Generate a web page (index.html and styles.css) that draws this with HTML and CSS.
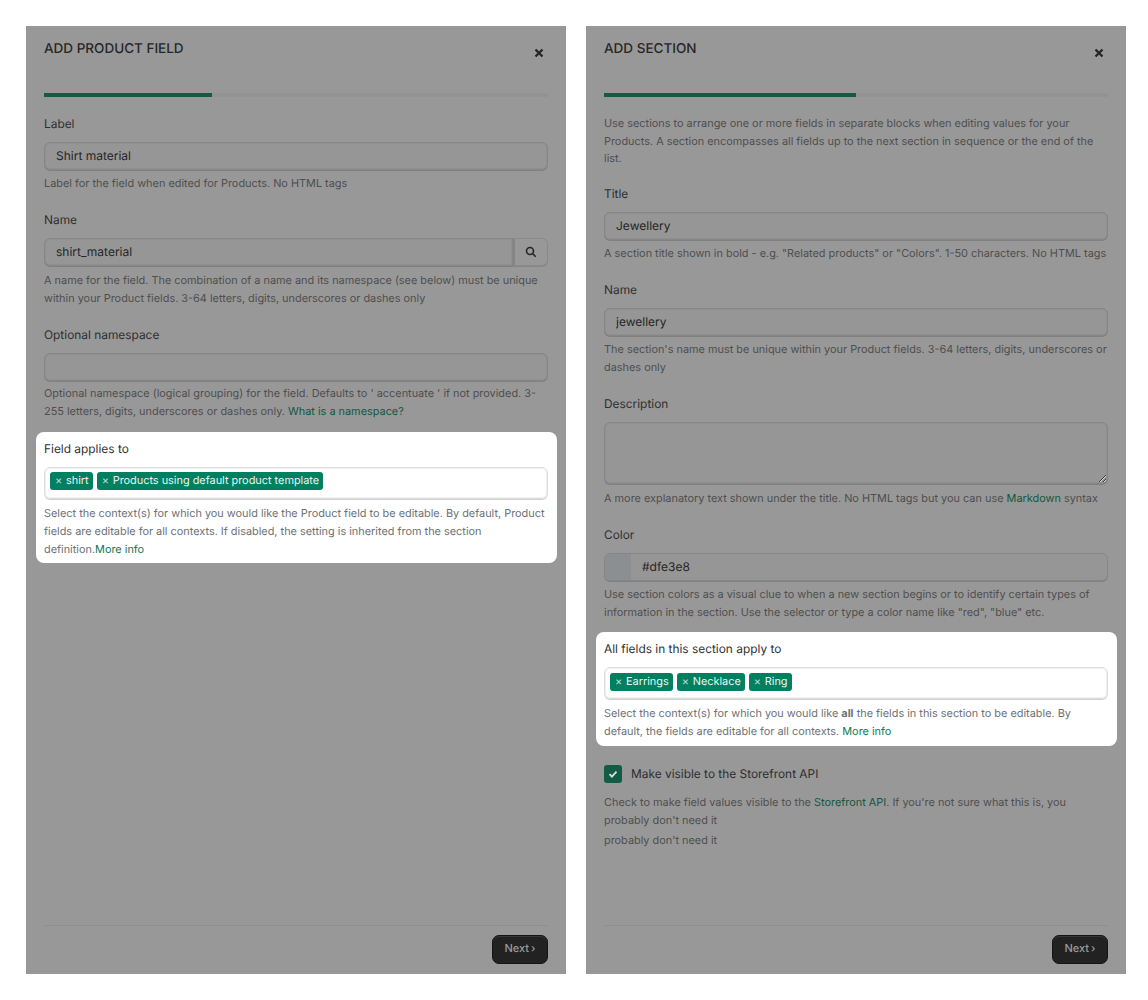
FILE: index.html
```html
<!DOCTYPE html>
<html lang="en">
<head>
<meta charset="utf-8">
<title>Add field and section</title>
<link rel="stylesheet" href="styles.css">
</head>
<body>
<main class="page">
  <section class="panel">
    <header class="panel-head">
      <h2>ADD PRODUCT FIELD</h2>
      <svg class="close" viewBox="0 0 10 10"><path d="M1.5 1.5l7 7M8.500 1.5l-7 7"/></svg>
    </header>
    <div class="progress"><div class="progress-fill step-one"></div></div>
    <div class="field">
      <label>Label</label>
      <input class="input" type="text" value="Shirt material">
      <p class="hint">Label for the field when edited for Products. No HTML tags</p>
    </div>
    <div class="field">
      <label>Name</label>
      <div class="input-group">
        <input class="input" type="text" value="shirt_material">
        <button class="search-btn" type="button"><svg viewBox="0 0 12 12"><circle cx="5" cy="5" r="3.500"/><path d="M7.700 7.700L10.700 10.700"/></svg></button>
      </div>
      <p class="hint hint-wide">A name for the field. The combination of a name and its namespace (see below) must be unique within your Product fields. 3-64 letters, digits, underscores or dashes only</p>
    </div>
    <div class="field">
      <label>Optional namespace</label>
      <input class="input" type="text" value="">
      <p class="hint hint-tight">Optional namespace (logical grouping) for the field. Defaults to ' accentuate ' if not provided. 3-255 letters, digits, underscores or dashes only. <a href="#">What is a namespace?</a></p>
    </div>
    <div class="highlight highlight-left">
      <label>Field applies to</label>
      <div class="tags">
        <span class="tag"><i>×</i>shirt</span>
        <span class="tag"><i>×</i>Products using default product template</span>
      </div>
      <p class="hint hint-wide">Select the context(s) for which you would like the Product field to be editable. By default, Product fields are editable for all contexts. If disabled, the setting is inherited from the section definition.<a href="#">More info</a></p>
    </div>
    <footer class="panel-foot"><button class="next" type="button">Next<span>›</span></button></footer>
  </section>

  <section class="panel">
    <header class="panel-head">
      <h2>ADD SECTION</h2>
      <svg class="close" viewBox="0 0 10 10"><path d="M1.5 1.5l7 7M8.500 1.5l-7 7"/></svg>
    </header>
    <div class="progress"><div class="progress-fill step-two"></div></div>
    <p class="hint intro">Use sections to arrange one or more fields in separate blocks when editing values for your Products. A section encompasses all fields up to the next section in sequence or the end of the list.</p>
    <div class="field field-first">
      <label>Title</label>
      <input class="input" type="text" value="Jewellery">
      <p class="hint">A section title shown in bold - e.g. "Related products" or "Colors". 1-50 characters. No HTML tags</p>
    </div>
    <div class="field">
      <label>Name</label>
      <input class="input" type="text" value="jewellery">
      <p class="hint">The section's name must be unique within your Product fields. 3-64 letters, digits, underscores or dashes only</p>
    </div>
    <div class="field">
      <label>Description</label>
      <textarea class="input textarea"></textarea>
      <p class="hint hint-wide">A more explanatory text shown under the title. No HTML tags but you can use <a href="#">Markdown</a> syntax</p>
    </div>
    <div class="field">
      <label>Color</label>
      <div class="color-input"><span class="swatch"></span><span class="color-value">#dfe3e8</span></div>
      <p class="hint">Use section colors as a visual clue to when a new section begins or to identify certain types of information in the section. Use the selector or type a color name like "red", "blue" etc.</p>
    </div>
    <div class="highlight highlight-right">
      <label>All fields in this section apply to</label>
      <div class="tags tags-low">
        <span class="tag"><i>×</i>Earrings</span>
        <span class="tag"><i>×</i>Necklace</span>
        <span class="tag"><i>×</i>Ring</span>
      </div>
      <p class="hint hint-wide">Select the context(s) for which you would like <b>all</b> the fields in this section to be editable. By default, the fields are editable for all contexts. <a href="#">More info</a></p>
    </div>
    <div class="check-row">
      <span class="checkbox"><svg viewBox="0 0 12 12"><path d="M2.500 6.200l2.400 2.400 4.600-5"/></svg></span>
      <span class="check-label">Make visible to the Storefront API</span>
    </div>
    <p class="hint check-hint">Check to make field values visible to the <a href="#">Storefront API</a>. If you're not sure what this is, you probably don't need it</p>
    <p class="hint repeat">probably don't need it</p>
    <footer class="panel-foot"><button class="next" type="button">Next<span>›</span></button></footer>
  </section>
</main>
</body>
</html>
```
FILE: styles.css
```css
* { box-sizing: border-box; }
html, body { margin: 0; background: #fff; }
body { font-family: Inter, "Liberation Sans", sans-serif; color: #2b2b2b; text-rendering: geometricPrecision; }
.page { display: flex; gap: 20px; padding: 26px 22px 26px 26px; height: 1000px; }
.panel {
  width: 540px; height: 948px; background: #989898;
  padding: 0 18px; display: flex; flex-direction: column;
}
.panel-head { display: flex; justify-content: space-between; align-items: flex-start; height: 67px; }
.panel-head h2 { margin: 14px 0 0; font-size: 13.500px; line-height: 18px; font-weight: 500; color: #262626; }
.close { width: 10px; height: 10px; margin: 22px 4px 0 0; fill: none; stroke: #262626; stroke-width: 2.300; }
.progress { height: 4px; background: #939393; border-radius: 2px; flex: none; }
.progress-fill { height: 100%; background: #135b45; }
.step-one { width: 168px; }
.step-two { width: 252px; }
.field { margin-top: 19px; }
.progress + .field { margin-top: 18px; }
.progress + .intro { margin-top: 18px; }
.field-first { margin-top: 17px; }
label { display: block; font-size: 11.900px; line-height: 18px; color: #2e2e2e; }
.input {
  display: block; width: 100%; height: 28px; margin-top: 9px; padding: 0 11px 1px;
  background: #969696; border: 1px solid #868686; border-radius: 6px;
  box-shadow: 0 1px 0 #808080, inset 0 0 0 1px #909090;
  font: 12px Inter, "Liberation Sans", sans-serif; color: #262626; outline: none;
  text-rendering: geometricPrecision;
}
.textarea { height: 62px; resize: vertical; }
.hint { margin: 4px 0 0; font-size: 10.900px; line-height: 18px; color: #4f4f4f; }
.hint-wide { margin-top: 5px; }
.hint-tight { margin-top: 3px; }
.hint a { color: #14573f; text-decoration: none; }
.hint b { font-weight: 700; }
.intro { line-height: 17.500px; margin-bottom: 0; }
.input-group { display: flex; margin-top: 9px; }
.input-group .input { margin-top: 0; flex: 1; border-radius: 6px 0 0 6px; }
.search-btn {
  width: 35px; height: 28px; padding: 0; background: #989898;
  border: 1px solid #8a8a8a; border-left: 2px solid #858585; border-radius: 0 6px 6px 0;
  box-shadow: 0 1px 0 #868686;
  display: flex; align-items: center; justify-content: center;
}
.search-btn svg { width: 12px; height: 12px; fill: none; stroke: #262626; stroke-width: 1.600; }
.highlight { background: #fff; border-radius: 8px; margin: 12px -9px 0 -8px; padding: 8px 9px 5px 8px; }
.highlight label { color: #303030; }
.highlight .hint { color: #6d7175; }
.highlight .hint a { color: #0d7a58; }
.highlight-left { height: 131px; }
.highlight-right { height: 114px; margin-top: 11px; }
.tags {
  display: flex; gap: 4px; align-items: flex-start; height: 32px; margin-top: 9px; padding: 4px 5px;
  border: 1px solid #dedede; border-radius: 6px; box-shadow: 0 1px 0 #d0d0d0, inset 0 0 0 1px #f0f0f0;
}
.tags-low { padding-top: 5px; }
.tag {
  display: inline-flex; align-items: center; height: 18px; padding: 0 4px 1px 5px;
  background: #008060; color: #eaf5f1; border-radius: 3px; font-size: 10.900px; line-height: 17px;
}
.tag i { font-style: normal; margin-right: 5px; font-size: 11px; color: #b9ddd2; width: 6px; }
.color-input {
  display: flex; align-items: center; height: 28px; margin-top: 9px; overflow: hidden;
  background: #969696; border: 1px solid #868686; border-radius: 6px; box-shadow: 0 1px 0 #808080;
}
.swatch { width: 26px; height: 100%; background: #8c8f92; flex: none; }
.color-value { margin-left: 11px; font-size: 12px; color: #262626; }
.check-row { display: flex; align-items: center; gap: 9px; margin-top: 19px; height: 18px; }
.checkbox { width: 18px; height: 18px; border-radius: 3px; background: #135b45; display: flex; align-items: center; justify-content: center; }
.checkbox svg { width: 12px; height: 12px; fill: none; stroke: #d5dedb; stroke-width: 1.900; }
.check-label { font-size: 11.900px; color: #2e2e2e; }
.check-hint { margin-top: 10px; }
.repeat { margin-top: 2px; }
.panel-foot { margin-top: auto; margin-bottom: 10px; padding-top: 9px; border-top: 1px solid #909090; display: flex; justify-content: flex-end; }
.next {
  width: 56px; height: 29px; padding: 0 0 3px; background: #222; border: 1px solid #141414; border-radius: 7px;
  box-shadow: inset 0 1px 0 #383838; color: #9a9a9a;
  font: 500 11px Inter, "Liberation Sans", sans-serif; text-rendering: geometricPrecision;
}
.next span { margin-left: 2px; }
```
